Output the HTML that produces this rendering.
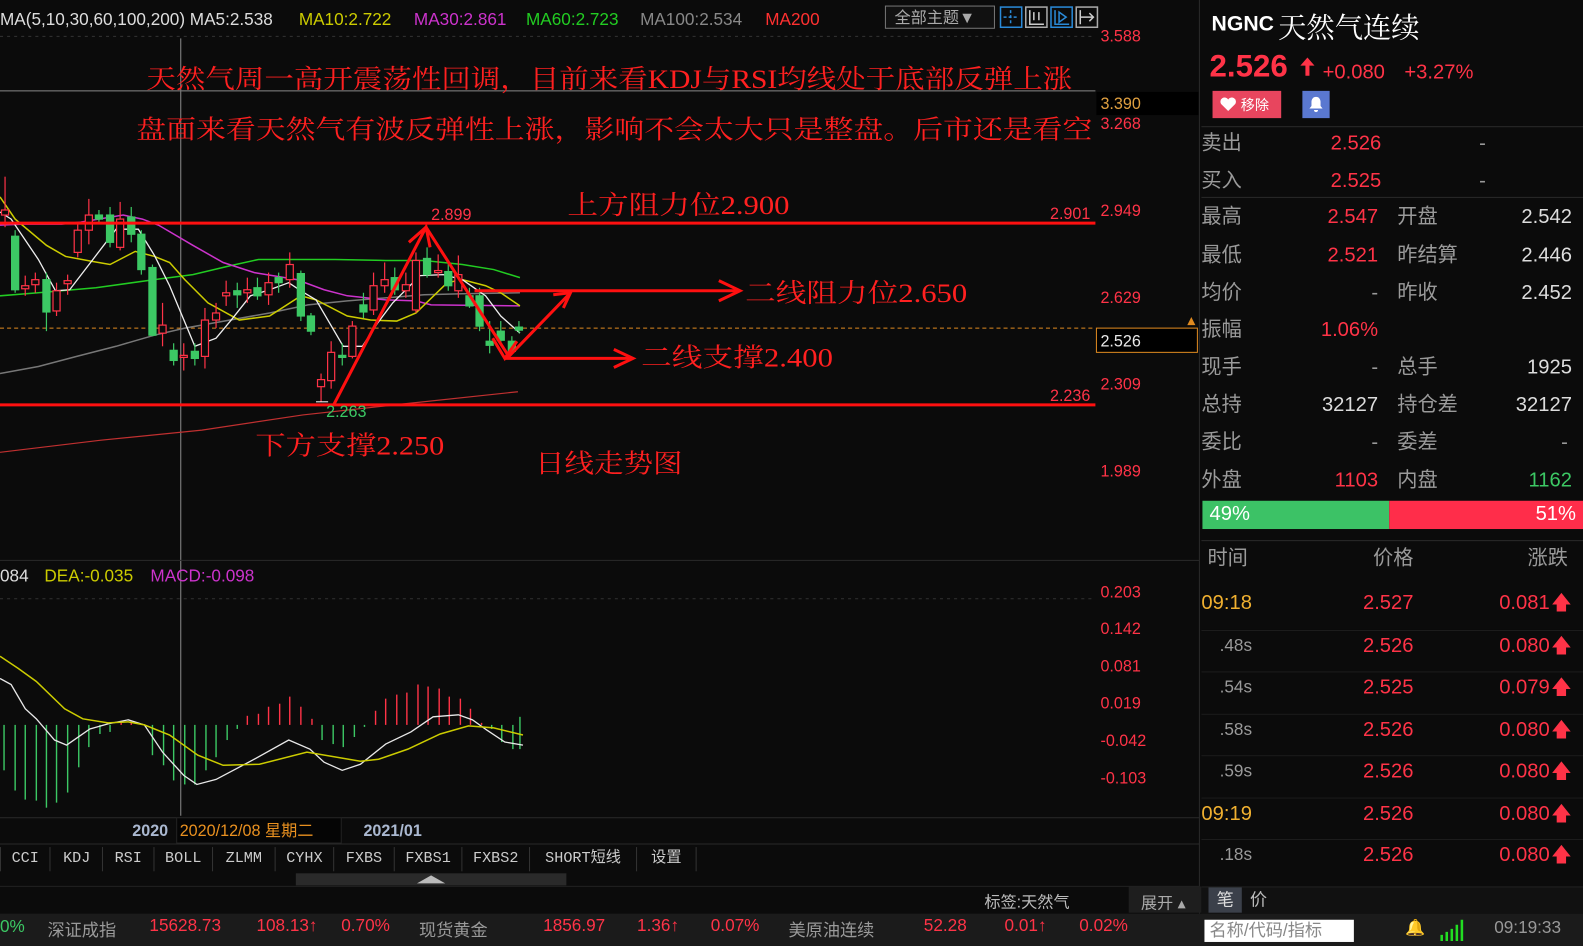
<!DOCTYPE html>
<html><head><meta charset="utf-8"><style>
*{margin:0;padding:0;box-sizing:border-box}
body{width:1583px;height:945px;background:#0b0b0b;overflow:hidden;position:relative;font-family:"Liberation Sans","Noto Sans CJK SC",sans-serif;color:#ccc}
#w{position:absolute;left:0;top:0;width:1568px;height:936px;transform:scale(1.0096);transform-origin:0 0}
.a{position:absolute;white-space:nowrap}
.r{color:#ff3347}.g{color:#3cc864}.l{color:#9a9a9a}
.row{position:absolute;left:1190px;width:393px;font-size:20px;height:30px;line-height:30px}
.row span{position:absolute;top:0;line-height:30px}
.tab{position:absolute;top:839px;height:24px;font-family:"Liberation Mono","Noto Sans CJK SC",monospace;font-size:15px;color:#ccc;border-right:1px solid #333;text-align:center;line-height:24px}
</style></head><body><div id="w">
<svg class="a" style="left:0;top:0" width="1190" height="905" font-family="Liberation Sans, Noto Sans CJK SC, sans-serif">
<line x1="0" y1="36" x2="1085" y2="36" stroke="#333" stroke-dasharray="3,4"/>
<line x1="0" y1="90" x2="1085" y2="90" stroke="#888" stroke-width="1"/>
<line x1="179" y1="38" x2="179" y2="808" stroke="#777" stroke-width="1.2"/>
<line x1="0" y1="555" x2="1188" y2="555" stroke="#2a2a2a"/>
<line x1="0" y1="593" x2="1085" y2="593" stroke="#333" stroke-dasharray="3,4"/>
<line x1="1188" y1="0" x2="1188" y2="905" stroke="#2a2a2a"/>
<line x1="0" y1="325" x2="1085" y2="325" stroke="#e08a20" stroke-dasharray="4,3"/>
<polyline fill="none" stroke="#777" stroke-width="1.5" points="0,370 38,363 76,353 115,343 153,332 183,325 267,310 305,302 344,298 382,295 420,292 458,291 515,290"/>
<polyline fill="none" stroke="#c03030" stroke-width="1.2" points="0,448 100,436 200,426 300,411 400,400 513,388"/>
<polyline fill="none" stroke="#22cc22" stroke-width="1.5" points="0,293 38,290 95,285 153,277 191,272 229,263 256,257 332,257 382,258 420,258 458,262 489,267 515,275"/>
<polyline fill="none" stroke="#cc33cc" stroke-width="1.5" points="0,223 23,222 61,222 80,220 122,213 141,217 157,223 191,243 221,260 252,270 294,277 321,287 344,293 382,297 412,298 427,302 515,303"/>
<polyline fill="none" stroke="#cccc00" stroke-width="1.5" points="0,195 15,217 46,243 65,254 92,259 109,262 134,249 153,254 168,260 183,277 206,300 237,317 267,313 298,293 313,297 344,313 367,317 393,318 412,310 443,280 458,277 481,283 496,290 515,303"/>
<polyline fill="none" stroke="#eee" stroke-width="1.3" points="0,210 11,217 38,257 55,288 69,287 92,257 115,227 137,227 153,253 168,283 193,343 214,335 229,317 248,293 267,287 286,280 298,288 313,297 340,343 359,343 374,320 389,300 416,273 439,272 458,277 481,293 496,313 515,330"/>
<g stroke-width="1.2">
<g stroke="#ff3347" fill="#0b0b0b">
<line x1="5" y1="175" x2="5" y2="225"/><rect x="1.5" y="208" width="7" height="5"/>
<line x1="25" y1="273" x2="25" y2="293"/><rect x="21.5" y="283" width="7" height="3"/>
<line x1="35" y1="270" x2="35" y2="290"/><rect x="31.5" y="277" width="7" height="5"/>
<line x1="56" y1="280" x2="56" y2="313"/><rect x="52.5" y="288" width="7" height="20"/>
<line x1="67" y1="272" x2="67" y2="292"/><rect x="63.5" y="278" width="7" height="3"/>
<line x1="77" y1="222" x2="77" y2="255"/><rect x="73.5" y="228" width="7" height="22"/>
<line x1="88" y1="197" x2="88" y2="242"/><rect x="84.5" y="213" width="7" height="15"/>
<line x1="119" y1="200" x2="119" y2="248"/><rect x="115.5" y="217" width="7" height="28"/>
<line x1="161" y1="300" x2="161" y2="343"/><rect x="157.5" y="322" width="7" height="8"/>
<line x1="182" y1="340" x2="182" y2="367"/><rect x="178.5" y="352" width="7" height="2"/>
<line x1="203" y1="305" x2="203" y2="365"/><rect x="199.5" y="317" width="7" height="36"/>
<line x1="214" y1="300" x2="214" y2="325"/><rect x="210.5" y="310" width="7" height="7"/>
<line x1="224" y1="278" x2="224" y2="303"/><rect x="220.5" y="290" width="7" height="3"/>
<line x1="245" y1="275" x2="245" y2="300"/><rect x="241.5" y="287" width="7" height="3"/>
<line x1="266" y1="270" x2="266" y2="302"/><rect x="262.5" y="280" width="7" height="12"/>
<line x1="287" y1="250" x2="287" y2="285"/><rect x="283.5" y="262" width="7" height="15"/>
<line x1="318" y1="370" x2="318" y2="398"/><rect x="314.5" y="376" width="7" height="7"/>
<line x1="328" y1="338" x2="328" y2="385"/><rect x="324.5" y="349" width="7" height="28"/>
<line x1="349" y1="318" x2="349" y2="355"/><rect x="345.5" y="323" width="7" height="30"/>
<line x1="370" y1="270" x2="370" y2="312"/><rect x="366.5" y="283" width="7" height="24"/>
<line x1="381" y1="260" x2="381" y2="290"/><rect x="377.5" y="277" width="7" height="6"/>
<line x1="402" y1="270" x2="402" y2="295"/><rect x="398.5" y="282" width="7" height="6"/>
<line x1="412" y1="250" x2="412" y2="310"/><rect x="408.5" y="258" width="7" height="49"/>
<line x1="434" y1="252" x2="434" y2="275"/><rect x="430.5" y="268" width="7" height="2"/>
<line x1="454" y1="253" x2="454" y2="295"/><rect x="450.5" y="272" width="7" height="16"/>
</g>
<g stroke="#3cc864" fill="#3cc864">
<line x1="15" y1="228" x2="15" y2="290"/><rect x="11.5" y="234" width="7" height="53"/>
<line x1="46" y1="270" x2="46" y2="328"/><rect x="42.5" y="277" width="7" height="32"/>
<line x1="98" y1="208" x2="98" y2="220"/><rect x="94.5" y="213" width="7" height="4"/>
<line x1="109" y1="205" x2="109" y2="245"/><rect x="105.5" y="213" width="7" height="27"/>
<line x1="130" y1="205" x2="130" y2="240"/><rect x="126.5" y="215" width="7" height="17"/>
<line x1="140" y1="228" x2="140" y2="272"/><rect x="136.5" y="232" width="7" height="35"/>
<line x1="151" y1="262" x2="151" y2="333"/><rect x="147.5" y="265" width="7" height="67"/>
<line x1="172" y1="340" x2="172" y2="362"/><rect x="168.5" y="347" width="7" height="10"/>
<line x1="193" y1="340" x2="193" y2="362"/><rect x="189.5" y="348" width="7" height="7"/>
<line x1="235" y1="280" x2="235" y2="305"/><rect x="231.5" y="288" width="7" height="4"/>
<line x1="255" y1="275" x2="255" y2="297"/><rect x="251.5" y="285" width="7" height="8"/>
<line x1="276" y1="270" x2="276" y2="290"/><rect x="272.5" y="275" width="7" height="5"/>
<line x1="298" y1="268" x2="298" y2="318"/><rect x="294.5" y="271" width="7" height="42"/>
<line x1="308" y1="310" x2="308" y2="332"/><rect x="304.5" y="313" width="7" height="15"/>
<line x1="339" y1="340" x2="339" y2="362"/><rect x="335.5" y="352" width="7" height="2"/>
<line x1="360" y1="290" x2="360" y2="315"/><rect x="356.5" y="302" width="7" height="7"/>
<line x1="391" y1="265" x2="391" y2="292"/><rect x="387.5" y="275" width="7" height="12"/>
<line x1="423" y1="245" x2="423" y2="275"/><rect x="419.5" y="256" width="7" height="16"/>
<line x1="444" y1="258" x2="444" y2="288"/><rect x="440.5" y="269" width="7" height="14"/>
<line x1="465" y1="285" x2="465" y2="305"/><rect x="461.5" y="293" width="7" height="10"/>
<line x1="475" y1="285" x2="475" y2="328"/><rect x="471.5" y="293" width="7" height="30"/>
<line x1="485" y1="318" x2="485" y2="350"/><rect x="481.5" y="338" width="7" height="4"/>
<line x1="496" y1="318" x2="496" y2="340"/><rect x="492.5" y="328" width="7" height="9"/>
<line x1="507" y1="333" x2="507" y2="350"/><rect x="503.5" y="338" width="7" height="10"/>
<line x1="514" y1="318" x2="514" y2="330"/><rect x="510.5" y="324" width="7" height="3"/>
</g></g>
<line x1="313" y1="398" x2="325" y2="398" stroke="#fff"/>
<g stroke="#ff1010" stroke-width="3" fill="none">
<line x1="0" y1="221" x2="1085" y2="221"/>
<line x1="0" y1="401" x2="1085" y2="401"/>
<polyline points="330,402 422,225 504,353 565,290"/>
<polyline points="405,240 422,225 426,245"/>
<polyline points="548,292 565,290 558,305"/>
<polyline points="488,335 500,355 512,338"/>
<line x1="470" y1="288" x2="733" y2="288"/><polyline points="712,278 733,288 712,298"/>
<line x1="500" y1="355" x2="627" y2="355"/><polyline points="608,346 627,355 608,364"/>
</g>
<g fill="#ff2020" font-family="Liberation Serif, Noto Serif CJK SC, serif" font-size="26">
<text x="145" y="87" textLength="917" lengthAdjust="spacingAndGlyphs">天然气周一高开震荡性回调，目前来看KDJ与RSI均线处于底部反弹上涨</text>
<text x="135" y="137" textLength="947" lengthAdjust="spacingAndGlyphs">盘面来看天然气有波反弹性上涨，影响不会太大只是整盘。后市还是看空</text>
<text x="562" y="212" textLength="220" lengthAdjust="spacingAndGlyphs">上方阻力位2.900</text>
<text x="738" y="299" textLength="220" lengthAdjust="spacingAndGlyphs">二线阻力位2.650</text>
<text x="635" y="363" textLength="190" lengthAdjust="spacingAndGlyphs">二线支撑2.400</text>
<text x="253" y="450" textLength="187" lengthAdjust="spacingAndGlyphs">下方支撑2.250</text>
<text x="530" y="468" textLength="146" lengthAdjust="spacingAndGlyphs">日线走势图</text>
</g>
<g font-size="16" fill="#ff3347">
<text x="427" y="218">2.899</text>
<text x="1040" y="217">2.901</text>
<text x="1040" y="397">2.236</text>
<text x="1090" y="41">3.588</text><text x="1090" y="128">3.268</text><text x="1090" y="214">2.949</text>
<text x="1090" y="300">2.629</text><text x="1090" y="386">2.309</text><text x="1090" y="472">1.989</text>
<text x="1090" y="592">0.203</text><text x="1090" y="628">0.142</text><text x="1090" y="665">0.081</text>
<text x="1090" y="702">0.019</text><text x="1090" y="739">-0.042</text><text x="1090" y="776">-0.103</text>
</g>
<text x="323" y="413" font-size="16" fill="#3cc864">2.263</text>
<rect x="1086" y="91" width="101" height="23" fill="#000"/>
<text x="1090" y="108" font-size="16" fill="#e0a040">3.390</text>
<rect x="1086" y="325" width="100" height="24" fill="#000" stroke="#e08a20"/>
<text x="1090" y="343" font-size="16" fill="#e8e8e8">2.526</text>
<polygon points="1176,322 1180,314 1184,322" fill="#e08a20"/>
<g font-size="17">
<text x="0" y="25" fill="#ddd">MA(5,10,30,60,100,200) MA5:2.538</text>
<text x="296" y="25" fill="#cccc00">MA10:2.722</text>
<text x="410" y="25" fill="#cc33cc">MA30:2.861</text>
<text x="521" y="25" fill="#22cc22">MA60:2.723</text>
<text x="634" y="25" fill="#888">MA100:2.534</text>
<text x="758" y="25" fill="#ff3030">MA200</text>
<text x="0" y="576" fill="#ddd">084</text>
<text x="44" y="576" fill="#cccc00">DEA:-0.035</text>
<text x="149" y="576" fill="#cc33cc">MACD:-0.098</text>
</g>
<rect x="877" y="6" width="108" height="22" fill="#111" stroke="#777"/>
<text x="886" y="23" font-size="16" fill="#aaa">全部主题▼</text>
<g fill="none" stroke-width="1.5">
<rect x="991" y="7" width="21" height="20" stroke="#2a8ad8"/><path d="M1001 10v14M994 17h14" stroke="#2a8ad8" stroke-dasharray="3,2"/>
<rect x="1016" y="7" width="21" height="20" stroke="#aaa"/><path d="M1020 10v14h14M1024 12v8M1029 12v8" stroke="#ccc"/>
<rect x="1041" y="7" width="21" height="20" stroke="#2a8ad8"/><path d="M1045 10v14h14M1049 12l7 5-7 5z" stroke="#2a8ad8"/>
<rect x="1066" y="7" width="21" height="20" stroke="#aaa"/><path d="M1070 10v14M1070 17h13M1079 13l4 4-4 4" stroke="#ccc"/>
</g>
<g stroke="#3cc864" stroke-width="1.4">
<line x1="4" y1="718" x2="4" y2="763"/><line x1="15" y1="718" x2="15" y2="783"/><line x1="25" y1="718" x2="25" y2="792"/><line x1="36" y1="718" x2="36" y2="793"/><line x1="46" y1="718" x2="46" y2="800"/><line x1="56" y1="718" x2="56" y2="795"/><line x1="67" y1="718" x2="67" y2="785"/><line x1="78" y1="718" x2="78" y2="760"/><line x1="88" y1="718" x2="88" y2="740"/><line x1="99" y1="718" x2="99" y2="727"/><line x1="109" y1="718" x2="109" y2="725"/>
<line x1="151" y1="718" x2="151" y2="748"/><line x1="162" y1="718" x2="162" y2="758"/><line x1="172" y1="718" x2="172" y2="773"/><line x1="183" y1="718" x2="183" y2="777"/><line x1="193" y1="718" x2="193" y2="777"/><line x1="204" y1="718" x2="204" y2="763"/><line x1="214" y1="718" x2="214" y2="750"/><line x1="225" y1="718" x2="225" y2="733"/><line x1="235" y1="718" x2="235" y2="722"/>
<line x1="319" y1="718" x2="319" y2="733"/><line x1="330" y1="718" x2="330" y2="737"/><line x1="340" y1="718" x2="340" y2="740"/><line x1="351" y1="718" x2="351" y2="730"/><line x1="361" y1="718" x2="361" y2="720"/>
<line x1="487" y1="718" x2="487" y2="722"/><line x1="497" y1="718" x2="497" y2="735"/><line x1="508" y1="718" x2="508" y2="742"/><line x1="515" y1="710" x2="515" y2="742"/>
</g>
<g stroke="#ff3347" stroke-width="1.4">
<line x1="120" y1="718" x2="120" y2="715"/><line x1="130" y1="718" x2="130" y2="715"/>
<line x1="245" y1="718" x2="245" y2="709"/><line x1="256" y1="718" x2="256" y2="707"/><line x1="266" y1="718" x2="266" y2="700"/><line x1="277" y1="718" x2="277" y2="697"/><line x1="287" y1="718" x2="287" y2="690"/><line x1="298" y1="718" x2="298" y2="700"/><line x1="309" y1="718" x2="309" y2="712"/>
<line x1="372" y1="718" x2="372" y2="704"/><line x1="382" y1="718" x2="382" y2="692"/><line x1="393" y1="718" x2="393" y2="688"/><line x1="403" y1="718" x2="403" y2="686"/><line x1="414" y1="718" x2="414" y2="678"/><line x1="424" y1="718" x2="424" y2="680"/><line x1="435" y1="718" x2="435" y2="682"/><line x1="445" y1="718" x2="445" y2="690"/><line x1="456" y1="718" x2="456" y2="692"/><line x1="466" y1="718" x2="466" y2="702"/><line x1="477" y1="718" x2="477" y2="716"/>
</g>
<polyline fill="none" stroke="#e8e8e8" stroke-width="1.3" points="0,672 11,678 25,702 36,712 54,733 66,738 89,722 107,717 127,713 143,718 161,745 182,768 195,777 214,772 250,753 286,733 307,742 321,755 339,763 357,757 382,737 407,725 429,710 454,708 468,713 482,723 500,735 518,738"/>
<polyline fill="none" stroke="#cccc00" stroke-width="1.5" points="0,650 18,662 36,675 64,702 82,712 107,716 127,715 143,718 168,728 196,748 221,758 257,757 304,745 357,754 375,752 404,742 436,727 464,719 489,721 518,728"/>
<line x1="0" y1="810" x2="1188" y2="810" stroke="#2a2a2a"/>
<line x1="0" y1="836" x2="1188" y2="836" stroke="#2a2a2a"/>
<text x="131" y="828" font-size="16" fill="#aab8d0" font-weight="bold">2020</text>
<rect x="175" y="810" width="163" height="25" fill="#050505" stroke="#222"/>
<text x="178" y="828" font-size="16" fill="#e89020">2020/12/08 星期二</text>
<text x="360" y="828" font-size="16" fill="#aab8d0" font-weight="bold">2021/01</text>
<rect x="293" y="865" width="268" height="12" fill="#2a2a2a"/>
<polygon points="413,875 427,867 441,875" fill="#bbb"/>
<line x1="0" y1="878" x2="1188" y2="878" stroke="#222"/>
</svg>
<div class="tab" style="left:0;width:50px;border-left:1px solid #333">CCI</div>
<div class="tab" style="left:51px;width:51px">KDJ</div>
<div class="tab" style="left:102px;width:51px">RSI</div>
<div class="tab" style="left:153px;width:58px">BOLL</div>
<div class="tab" style="left:211px;width:62px">ZLMM</div>
<div class="tab" style="left:273px;width:58px">CYHX</div>
<div class="tab" style="left:331px;width:60px">FXBS</div>
<div class="tab" style="left:391px;width:67px">FXBS1</div>
<div class="tab" style="left:458px;width:67px">FXBS2</div>
<div class="tab" style="left:525px;width:106px">SHORT短线</div>
<div class="tab" style="left:631px;width:59px">设置</div>
<div class="a l" style="left:975px;top:880px;font-size:16px;color:#bbb">标签:天然气</div>
<div class="a" style="left:1118px;top:878px;width:72px;height:26px;background:#1e1e1e;font-size:16px;color:#aaa;padding:3px 0 0 12px">展开 ▴</div>
<div class="a" style="left:1190px;top:878px;width:393px;height:27px;background:#111;border-top:1px solid #222"></div>
<div class="a" style="left:1197px;top:879px;width:33px;height:25px;background:#3b404a;color:#ddd;font-size:17px;text-align:center;line-height:25px">笔</div>
<div class="a" style="left:1238px;top:879px;font-size:17px;color:#bbb;line-height:25px">价</div>
<div class="a" style="left:0;top:905px;width:1583px;height:32px;background:#1b1b1b"></div>
<div class="a" style="top:907px;left:0;font-size:17px;line-height:22px"><span class="g">0%</span></div>
<div class="a l" style="top:907px;left:47px;font-size:17px">深证成指</div>
<div class="a r" style="top:907px;left:148px;font-size:17px">15628.73</div>
<div class="a r" style="top:907px;left:254px;font-size:17px">108.13↑</div>
<div class="a r" style="top:907px;left:338px;font-size:17px">0.70%</div>
<div class="a l" style="top:907px;left:415px;font-size:17px">现货黄金</div>
<div class="a r" style="top:907px;left:538px;font-size:17px">1856.97</div>
<div class="a r" style="top:907px;left:631px;font-size:17px">1.36↑</div>
<div class="a r" style="top:907px;left:704px;font-size:17px">0.07%</div>
<div class="a l" style="top:907px;left:781px;font-size:17px">美原油连续</div>
<div class="a r" style="top:907px;left:915px;font-size:17px">52.28</div>
<div class="a r" style="top:907px;left:995px;font-size:17px">0.01↑</div>
<div class="a r" style="top:907px;left:1069px;font-size:17px">0.02%</div>
<div class="a" style="top:911px;left:1193px;width:148px;height:22px;background:#fff;color:#888;font-size:17px;padding-left:5px;line-height:22px">名称/代码/指标</div>
<div class="a" style="top:909px;left:1392px;font-size:16px;color:#f0b020">🔔</div>
<svg class="a" style="left:1425px;top:910px" width="30" height="22"><g stroke="#22dd22" stroke-width="2.5"><line x1="3" y1="22" x2="3" y2="16"/><line x1="8" y1="22" x2="8" y2="13"/><line x1="13" y1="22" x2="13" y2="10"/><line x1="18" y1="22" x2="18" y2="6"/><line x1="23" y1="22" x2="23" y2="1"/></g></svg>
<div class="a" style="top:909px;left:1480px;font-size:17px;color:#999">09:19:33</div>
<div class="a" style="left:1200px;top:12px;font-size:21px;font-weight:bold;color:#fff">NGNC</div>
<div class="a" style="left:1266px;top:6px;font-size:28px;color:#fff;font-family:'Liberation Serif','Noto Serif CJK SC',serif">天然气连续</div>
<div class="a r" style="left:1198px;top:48px;font-size:31px;font-weight:bold">2.526</div>
<svg class="a" style="left:1286px;top:56px" width="18" height="20"><path d="M9 1L2 9h5v10h4V9h5z" fill="#ff3347"/></svg>
<div class="a r" style="left:1310px;top:61px;font-size:20px">+0.080</div>
<div class="a r" style="left:1391px;top:61px;font-size:20px">+3.27%</div>
<div class="a" style="left:1201px;top:90px;width:68px;height:27px;background:#e8455e;color:#fff;font-size:14px;padding:4px 0 0 28px">移除</div>
<svg class="a" style="left:1208px;top:96px" width="17" height="15"><path d="M8.5 14L1.5 7A3.6 3.6 0 0 1 8.5 2.5 3.6 3.6 0 0 1 15.5 7z" fill="#fff"/></svg>
<div class="a" style="left:1290px;top:90px;width:27px;height:27px;background:#5a78d0"></div>
<svg class="a" style="left:1294px;top:94px" width="19" height="19"><path d="M9.5 2c-3 0-4.5 2.5-4.5 5v4l-2 2.5h13L14 11V7c0-2.5-1.5-5-4.5-5zM7.5 15a2 2 0 0 0 4 0z" fill="#fff"/></svg>
<div class="a" style="left:1190px;top:125px;width:393px;border-top:1px solid #2a2a2a"></div>
<div class="a" style="left:1190px;top:195px;width:393px;border-top:1px solid #2a2a2a"></div>
<div class="row" style="top:127px"><span class="l" style="left:0">卖出</span><span class="r" style="left:128px">2.526</span><span class="l" style="left:275px">-</span></div>
<div class="row" style="top:164px"><span class="l" style="left:0">买入</span><span class="r" style="left:128px">2.525</span><span class="l" style="left:275px">-</span></div>
<div class="row" style="top:200px"><span class="l">最高</span><span class="r" style="right:218px">2.547</span><span class="l" style="left:194px">开盘</span><span style="right:26px;color:#ddd">2.542</span></div>
<div class="row" style="top:238px"><span class="l">最低</span><span class="r" style="right:218px">2.521</span><span class="l" style="left:194px">昨结算</span><span style="right:26px;color:#ddd">2.446</span></div>
<div class="row" style="top:275px"><span class="l">均价</span><span class="l" style="right:218px">-</span><span class="l" style="left:194px">昨收</span><span style="right:26px;color:#ddd">2.452</span></div>
<div class="row" style="top:312px"><span class="l">振幅</span><span class="r" style="right:218px">1.06%</span></div>
<div class="row" style="top:349px"><span class="l">现手</span><span class="l" style="right:218px">-</span><span class="l" style="left:194px">总手</span><span style="right:26px;color:#ddd">1925</span></div>
<div class="row" style="top:386px"><span class="l">总持</span><span style="right:218px;color:#ddd">32127</span><span class="l" style="left:194px">持仓差</span><span style="right:26px;color:#ddd">32127</span></div>
<div class="row" style="top:423px"><span class="l">委比</span><span class="l" style="right:218px">-</span><span class="l" style="left:194px">委差</span><span class="l" style="right:30px">-</span></div>
<div class="row" style="top:461px"><span class="l">外盘</span><span class="r" style="right:218px">1103</span><span class="l" style="left:194px">内盘</span><span class="g" style="right:26px">1162</span></div>
<div class="a" style="left:1191px;top:496px;width:185px;height:28px;background:#3cc266;color:#fff;font-size:20px;padding:2px 0 0 7px">49%</div>
<div class="a" style="left:1376px;top:496px;width:193px;height:28px;background:#ff2d4a;color:#fff;font-size:20px;text-align:right;padding:2px 8px 0 0">51%</div>
<div class="a" style="left:1190px;top:535px;width:393px;border-top:1px solid #2a2a2a"></div>
<div class="row" style="top:538px"><span class="l" style="left:6px">时间</span><span class="l" style="left:170px">价格</span><span class="l" style="right:30px">涨跌</span></div>
<div class="row" style="top:582px"><span style="left:0;color:#f0b030">09:18</span><span class="r" style="left:160px">2.527</span><span class="r" style="right:48px">0.081</span><span class="r" style="right:26px">🡅</span></div>
<div class="row" style="top:624px;border-top:1px solid #1c1c1c"><span class="l" style="left:18px;font-size:17px">.48s</span><span class="r" style="left:160px">2.526</span><span class="r" style="right:48px">0.080</span><span class="r" style="right:26px">🡅</span></div>
<div class="row" style="top:665px;border-top:1px solid #1c1c1c"><span class="l" style="left:18px;font-size:17px">.54s</span><span class="r" style="left:160px">2.525</span><span class="r" style="right:48px">0.079</span><span class="r" style="right:26px">🡅</span></div>
<div class="row" style="top:707px;border-top:1px solid #1c1c1c"><span class="l" style="left:18px;font-size:17px">.58s</span><span class="r" style="left:160px">2.526</span><span class="r" style="right:48px">0.080</span><span class="r" style="right:26px">🡅</span></div>
<div class="row" style="top:748px;border-top:1px solid #1c1c1c"><span class="l" style="left:18px;font-size:17px">.59s</span><span class="r" style="left:160px">2.526</span><span class="r" style="right:48px">0.080</span><span class="r" style="right:26px">🡅</span></div>
<div class="row" style="top:790px;border-top:1px solid #1c1c1c"><span style="left:0;color:#f0b030">09:19</span><span class="r" style="left:160px">2.526</span><span class="r" style="right:48px">0.080</span><span class="r" style="right:26px">🡅</span></div>
<div class="row" style="top:831px;border-top:1px solid #1c1c1c"><span class="l" style="left:18px;font-size:17px">.18s</span><span class="r" style="left:160px">2.526</span><span class="r" style="right:48px">0.080</span><span class="r" style="right:26px">🡅</span></div>
</div></body></html>
